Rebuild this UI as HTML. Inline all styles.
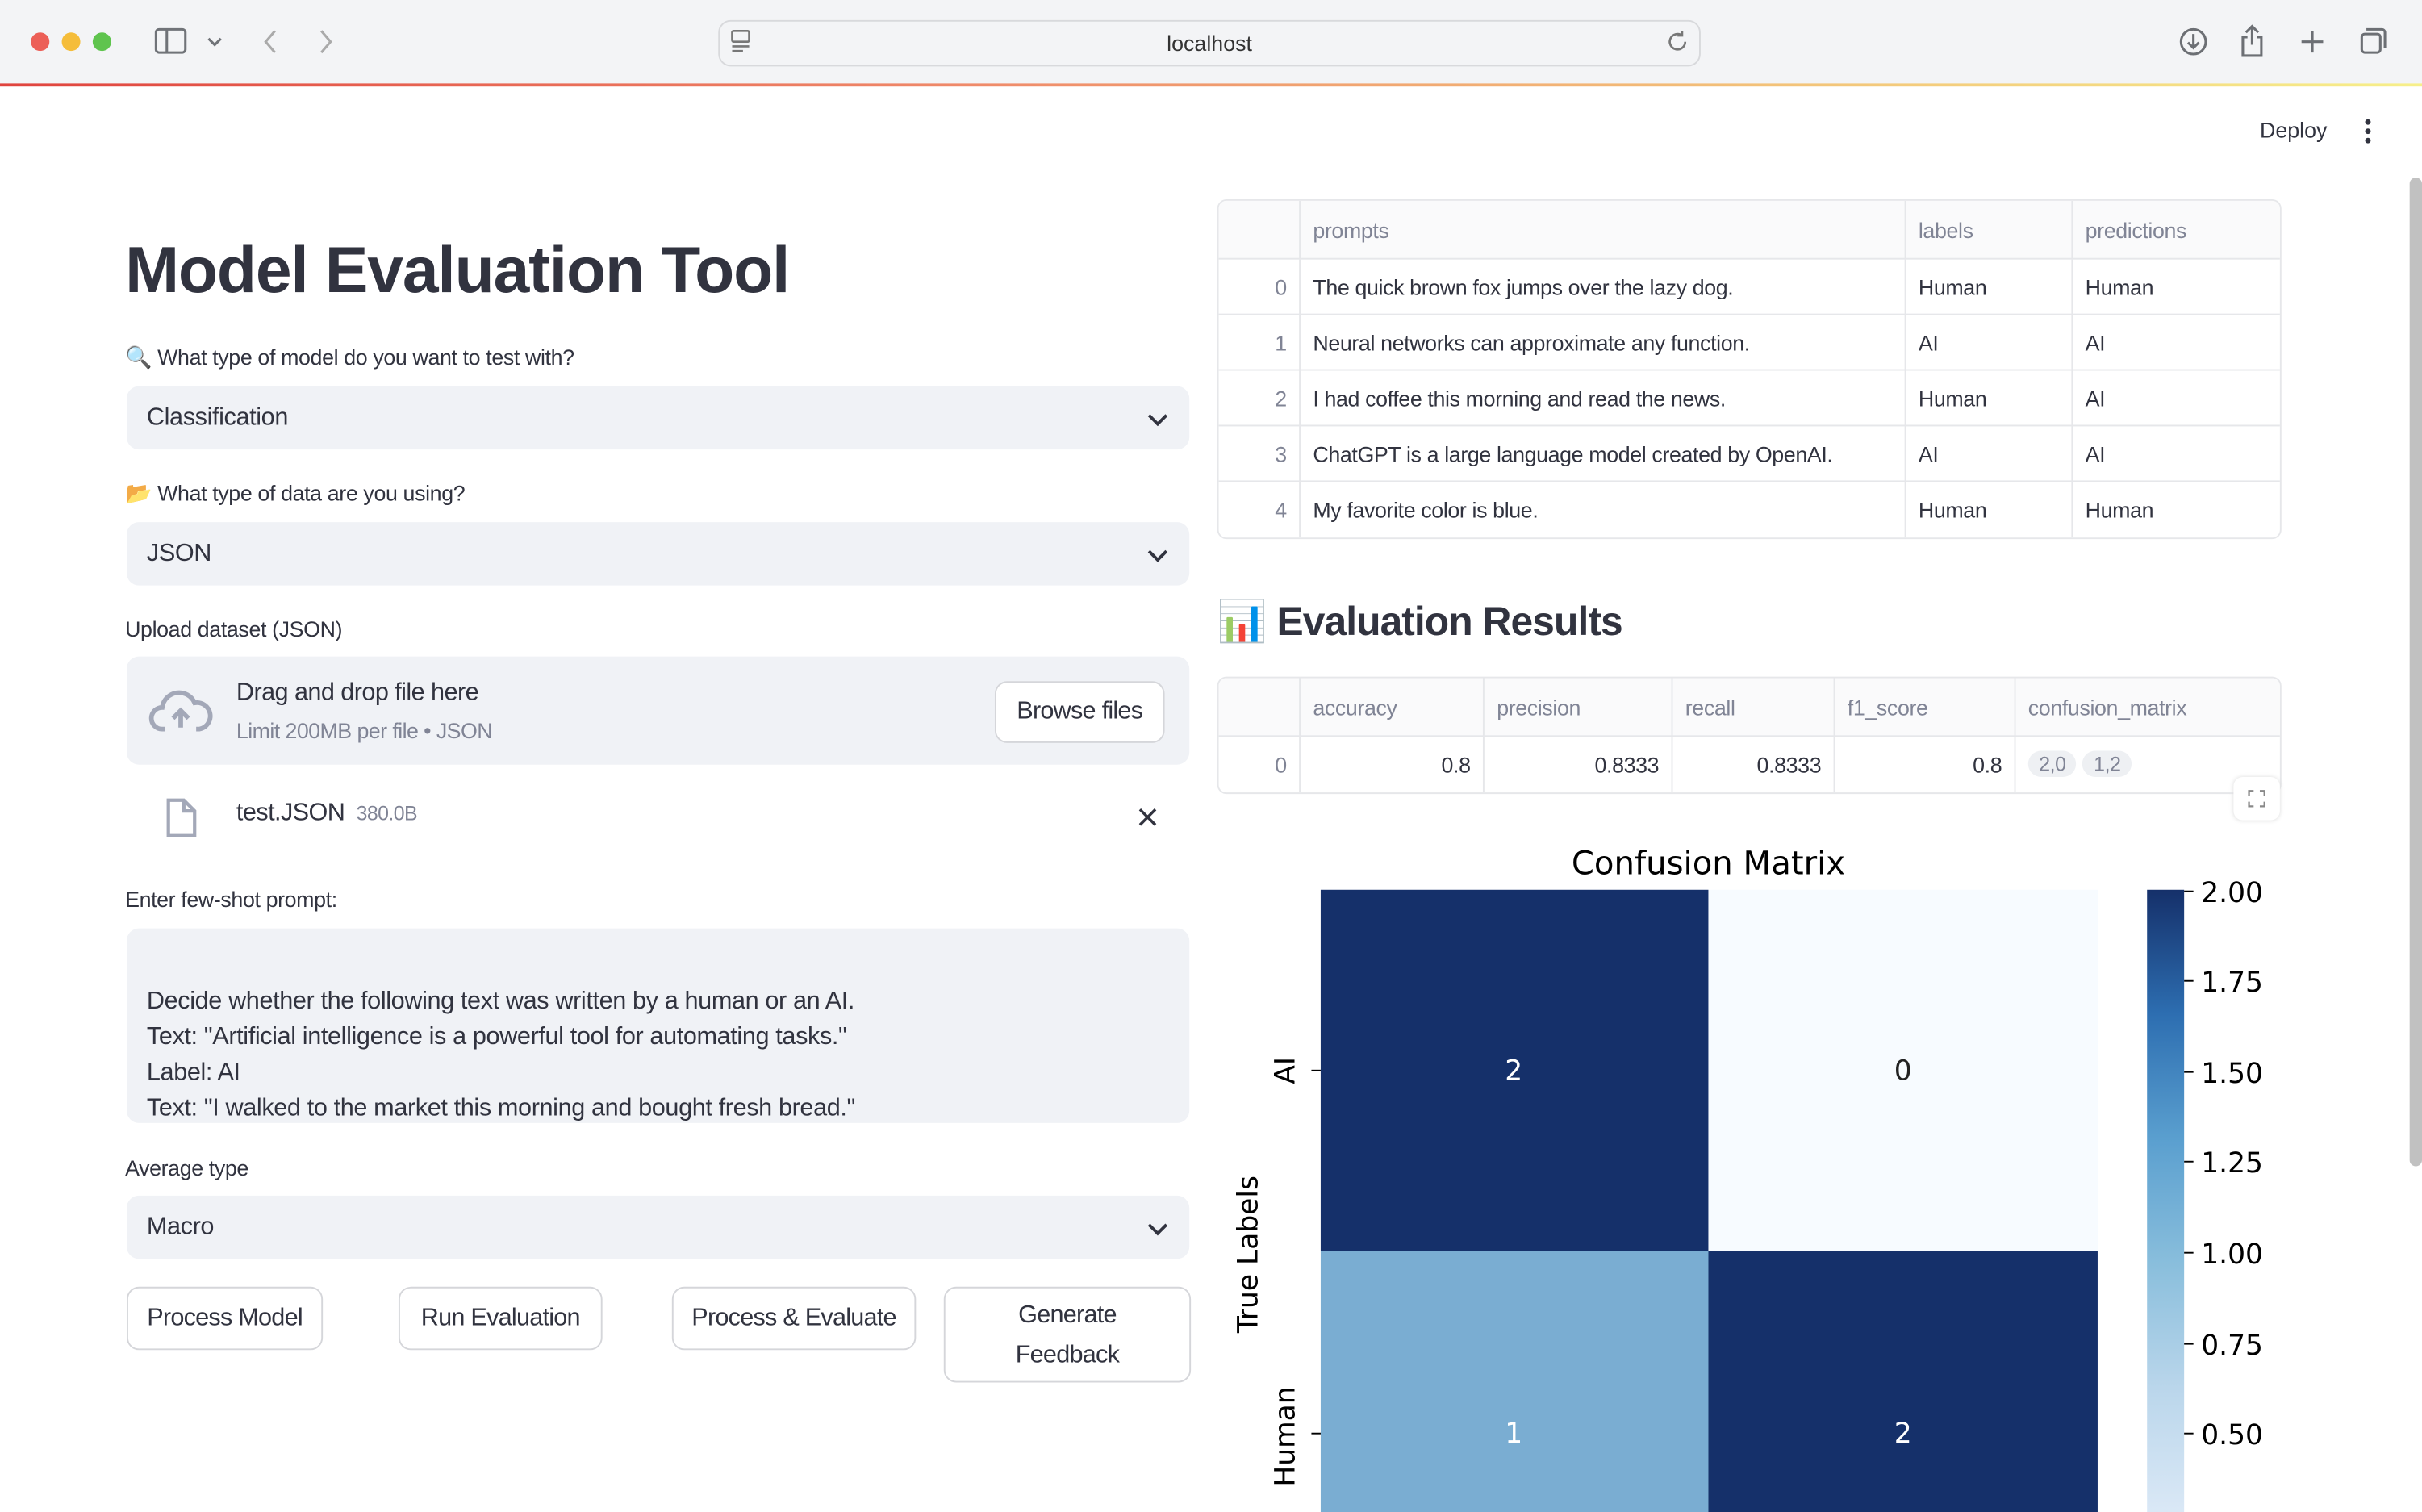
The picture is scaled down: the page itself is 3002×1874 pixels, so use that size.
<!DOCTYPE html>
<html><head><meta charset="utf-8">
<style>
html,body{margin:0;padding:0;width:3002px;height:1874px;overflow:hidden;background:#fff}
#w{position:absolute;left:0;top:0;width:1568px;height:979px;transform:scale(1.91454);transform-origin:0 0;font-family:"Liberation Sans",sans-serif;color:#31333f;overflow:hidden}
.a{position:absolute}
.tb{left:0;top:0;width:1568px;height:54px;background:#f3f4f6}
.grad{left:0;top:54px;width:1568px;height:2px;background:linear-gradient(90deg,#e0443e,#ef8a6a 40%,#f3c57a 75%,#f6ef8a)}
.lbl{font-size:14px;color:#31333f;letter-spacing:-0.2px}
.sel{left:82px;width:688px;height:41px;background:#f0f2f6;border-radius:8px;font-size:16px;line-height:41px;text-indent:13px;letter-spacing:-0.2px}
.chev{position:absolute;right:16px;top:15px;width:7px;height:7px;border-right:2px solid #31333f;border-bottom:2px solid #31333f;transform:rotate(45deg)}
.btn{border:1px solid #d5d6da;border-radius:8px;background:#fff;font-size:16px;text-align:center;box-sizing:border-box;letter-spacing:-0.4px}
table{border-collapse:collapse;font-size:14px;letter-spacing:-0.2px}
.tbl{border:1px solid #e6e7ea;border-radius:6px;overflow:hidden}
td{border-right:1px solid #e6e7ea;border-bottom:1px solid #e6e7ea;padding:0 8px;height:36px;box-sizing:border-box}
tr:last-child td{border-bottom:none}
td:last-child{border-right:none}
th{font-weight:normal;color:#808495;text-align:left;padding:0 8px;height:37px;border-right:1px solid #e6e7ea;border-bottom:1px solid #e6e7ea;background:#fafafb}
th:last-child{border-right:none}
.ix{color:#808495;text-align:right}
.r{text-align:right}
.pill{display:inline-block;background:#eef0f3;border-radius:10px;padding:1px 7px;font-size:13px;color:#808495;margin-right:4px}
</style></head><body><div id="w">
<div class="a tb"></div>
<div class="a" style="left:20px;top:21px;width:12px;height:12px;border-radius:50%;background:#ec5f57"></div>
<div class="a" style="left:40px;top:21px;width:12px;height:12px;border-radius:50%;background:#f5bd3a"></div>
<div class="a" style="left:60px;top:21px;width:12px;height:12px;border-radius:50%;background:#5fc44e"></div>
<svg class="a" style="left:98px;top:16px" width="120" height="22" fill="none" stroke="#707378" stroke-width="1.6"><rect x="3" y="3" width="19" height="15" rx="2"/><line x1="10" y1="3" x2="10" y2="18"/><path d="M37 9l4 4 4-4"/><path d="M80 4l-6 7 6 7" stroke="#aaa"/><path d="M110 4l6 7-6 7" stroke="#aaa"/></svg>
<div class="a" style="left:465px;top:13px;width:634px;height:28px;border:1px solid #d8d9dc;border-radius:8px;background:#f3f4f6;font-size:14px;text-align:center;line-height:28px;color:#333">localhost</div>
<svg class="a" style="left:472px;top:19px" width="16" height="16" fill="none" stroke="#777" stroke-width="1.4"><rect x="2" y="1" width="11" height="7" rx="1"/><line x1="2" y1="11" x2="13" y2="11"/><line x1="2" y1="14" x2="9" y2="14"/></svg>
<svg class="a" style="left:1078px;top:18px" width="16" height="18" fill="none" stroke="#777" stroke-width="1.4"><path d="M13 9a5 5 0 1 1-2-4"/><path d="M11 2v3h-3"/></svg>
<svg class="a" style="left:1408px;top:14px" width="145" height="26" fill="none" stroke="#6c6f74" stroke-width="1.6"><circle cx="12" cy="13" r="8"/><path d="M12 8v9M8.5 13.5l3.5 3.5 3.5-3.5"/><path d="M47 10h-3v12h12V10h-3M50 3v12M46 7l4-4 4 4"/><path d="M89 6v14M82 13h14"/><rect x="121" y="8" width="12" height="12" rx="2"/><path d="M124 5h10a2 2 0 0 1 2 2v10"/></svg>
<div class="a grad"></div>
<div class="a" style="left:1463px;top:76px;font-size:14px">Deploy</div>
<svg class="a" style="left:1528px;top:76px" width="10" height="18" fill="#31333f"><circle cx="5" cy="3" r="1.8"/><circle cx="5" cy="9" r="1.8"/><circle cx="5" cy="15" r="1.8"/></svg>
<div class="a" style="left:1560px;top:115px;width:8px;height:640px;background:#c1c1c1;border-radius:4px"></div>

<div class="a" style="left:81px;top:151px;font-size:42px;font-weight:bold;letter-spacing:-0.6px">Model Evaluation Tool</div>
<div class="a lbl" style="left:81px;top:223px">🔍 What type of model do you want to test with?</div>
<div class="a sel" style="top:250px">Classification<span class="chev"></span></div>
<div class="a lbl" style="left:81px;top:311px">📂 What type of data are you using?</div>
<div class="a sel" style="top:338px">JSON<span class="chev"></span></div>
<div class="a lbl" style="left:81px;top:399px">Upload dataset (JSON)</div>
<div class="a" style="left:82px;top:425px;width:688px;height:70px;background:#f0f2f6;border-radius:8px"></div>
<svg class="a" style="left:96px;top:444px" width="42" height="34" fill="none" stroke="#a3a8b8" stroke-width="3"><path d="M11 28H9a7 7 0 0 1 0-14 11 11 0 0 1 21-3 8 8 0 0 1 3 17h-2"/><path d="M21 27V16M16 21l5-5 5 5"/></svg>
<div class="a" style="left:153px;top:440px;font-size:16px;letter-spacing:-0.3px">Drag and drop file here</div>
<div class="a" style="left:153px;top:465px;font-size:14px;color:#808495;letter-spacing:-0.3px">Limit 200MB per file • JSON</div>
<div class="a btn" style="left:644px;top:441px;width:110px;height:40px;line-height:38px">Browse files</div>
<svg class="a" style="left:106px;top:516px" width="24" height="28" fill="none" stroke="#a3a8b8" stroke-width="2.2"><path d="M3 2h10l7 7v16H3z"/><path d="M13 2v7h7"/></svg>
<div class="a" style="left:153px;top:518px;font-size:16px;letter-spacing:-0.3px">test.JSON <span style="font-size:13px;color:#808495">&nbsp;380.0B</span></div>
<svg class="a" style="left:736px;top:522px" width="14" height="14" stroke="#31333f" stroke-width="1.8"><path d="M2 2l10 10M12 2L2 12"/></svg>
<div class="a lbl" style="left:81px;top:574px">Enter few-shot prompt:</div>
<div class="a" style="left:82px;top:601px;width:688px;height:126px;background:#f0f2f6;border-radius:8px;overflow:hidden;font-size:16px;line-height:23px;padding:36px 0 0 13px;box-sizing:border-box;letter-spacing:-0.2px">Decide whether the following text was written by a human or an AI.<br>Text: "Artificial intelligence is a powerful tool for automating tasks."<br>Label: AI<br>Text: "I walked to the market this morning and bought fresh bread."</div>
<div class="a lbl" style="left:81px;top:748px">Average type</div>
<div class="a sel" style="top:774px">Macro<span class="chev"></span></div>
<div class="a btn" style="left:82px;top:833px;width:127px;height:41px;line-height:39px">Process Model</div>
<div class="a btn" style="left:258px;top:833px;width:132px;height:41px;line-height:39px">Run Evaluation</div>
<div class="a btn" style="left:435px;top:833px;width:158px;height:41px;line-height:39px">Process &amp; Evaluate</div>
<div class="a btn" style="left:611px;top:833px;width:160px;height:62px;line-height:26px;padding-top:5px">Generate<br>Feedback</div>

<div class="a tbl" style="left:788px;top:129px;width:687px;border-radius:6px 6px 6px 6px">
<table style="width:688px">
<tr><th style="width:36px"></th><th style="width:375px">prompts</th><th style="width:91px">labels</th><th>predictions</th></tr>
<tr><td class="ix">0</td><td>The quick brown fox jumps over the lazy dog.</td><td>Human</td><td>Human</td></tr>
<tr><td class="ix">1</td><td>Neural networks can approximate any function.</td><td>AI</td><td>AI</td></tr>
<tr><td class="ix">2</td><td>I had coffee this morning and read the news.</td><td>Human</td><td>AI</td></tr>
<tr><td class="ix">3</td><td>ChatGPT is a large language model created by OpenAI.</td><td>AI</td><td>AI</td></tr>
<tr><td class="ix">4</td><td>My favorite color is blue.</td><td>Human</td><td>Human</td></tr>
</table></div>
<div class="a" style="left:788px;top:387px;font-size:26px;font-weight:bold;letter-spacing:-0.5px">📊 Evaluation Results</div>
<div class="a tbl" style="left:788px;top:438px;width:687px">
<table style="width:688px">
<tr><th style="width:36px"></th><th style="width:102px">accuracy</th><th style="width:105px">precision</th><th style="width:88px">recall</th><th style="width:100px">f1_score</th><th>confusion_matrix</th></tr>
<tr><td class="ix">0</td><td class="r">0.8</td><td class="r">0.8333</td><td class="r">0.8333</td><td class="r">0.8</td><td><span class="pill">2,0</span><span class="pill">1,2</span></td></tr>
</table></div>
<div class="a" style="left:1446px;top:503px;width:30px;height:28px;border-radius:6px;background:#fff;box-shadow:0 0 3px #ddd"></div>
<svg class="a" style="left:1455px;top:511px" width="12" height="12" fill="none" stroke="#888" stroke-width="1.2"><path d="M1 4V1h3M8 1h3v3M11 8v3H8M4 11H1V8"/></svg>

<svg class="a" style="left:780px;top:530px" width="780" height="449" font-family="DejaVu Sans, sans-serif">
<defs><linearGradient id="cb" x1="0" y1="1" x2="0" y2="0">
<stop offset="0" stop-color="#dae8f6"/><stop offset="0.2" stop-color="#bad6eb"/><stop offset="0.4" stop-color="#89bedc"/><stop offset="0.6" stop-color="#5a9fcf"/><stop offset="0.8" stop-color="#2d6eb1"/><stop offset="1" stop-color="#15306a"/></linearGradient></defs>
<text x="326" y="36" font-size="21" text-anchor="middle" fill="#000">Confusion Matrix</text>
<rect x="75" y="46" width="251" height="234" fill="#15306a"/>
<rect x="326" y="46" width="252" height="234" fill="#f7fbff"/>
<rect x="75" y="280" width="251" height="169" fill="#7aadd2"/>
<rect x="326" y="280" width="252" height="169" fill="#15306a"/>
<g font-size="18" text-anchor="middle"><text x="200" y="169" fill="#fff">2</text><text x="452" y="169" fill="#222">0</text><text x="200" y="404" fill="#fff">1</text><text x="452" y="404" fill="#fff">2</text></g>
<g stroke="#000" stroke-width="1"><line x1="69" y1="163" x2="75" y2="163"/><line x1="69" y1="398" x2="75" y2="398"/></g>
<text transform="translate(58,163) rotate(-90)" font-size="18" text-anchor="middle">AI</text>
<text transform="translate(58,400) rotate(-90)" font-size="18" text-anchor="middle">Human</text>
<text transform="translate(34,282) rotate(-90)" font-size="18" text-anchor="middle">True Labels</text>
<rect x="610" y="46" width="24" height="403" fill="url(#cb)"/>
<g stroke="#000" stroke-width="1"><line x1="634" y1="47" x2="640" y2="47"/><line x1="634" y1="105" x2="640" y2="105"/><line x1="634" y1="164" x2="640" y2="164"/><line x1="634" y1="222" x2="640" y2="222"/><line x1="634" y1="281" x2="640" y2="281"/><line x1="634" y1="340" x2="640" y2="340"/><line x1="634" y1="398" x2="640" y2="398"/></g>
<g font-size="18" fill="#000"><text x="645" y="54">2.00</text><text x="645" y="112">1.75</text><text x="645" y="171">1.50</text><text x="645" y="229">1.25</text><text x="645" y="288">1.00</text><text x="645" y="347">0.75</text><text x="645" y="405">0.50</text></g>
</svg>
</div></body></html>
